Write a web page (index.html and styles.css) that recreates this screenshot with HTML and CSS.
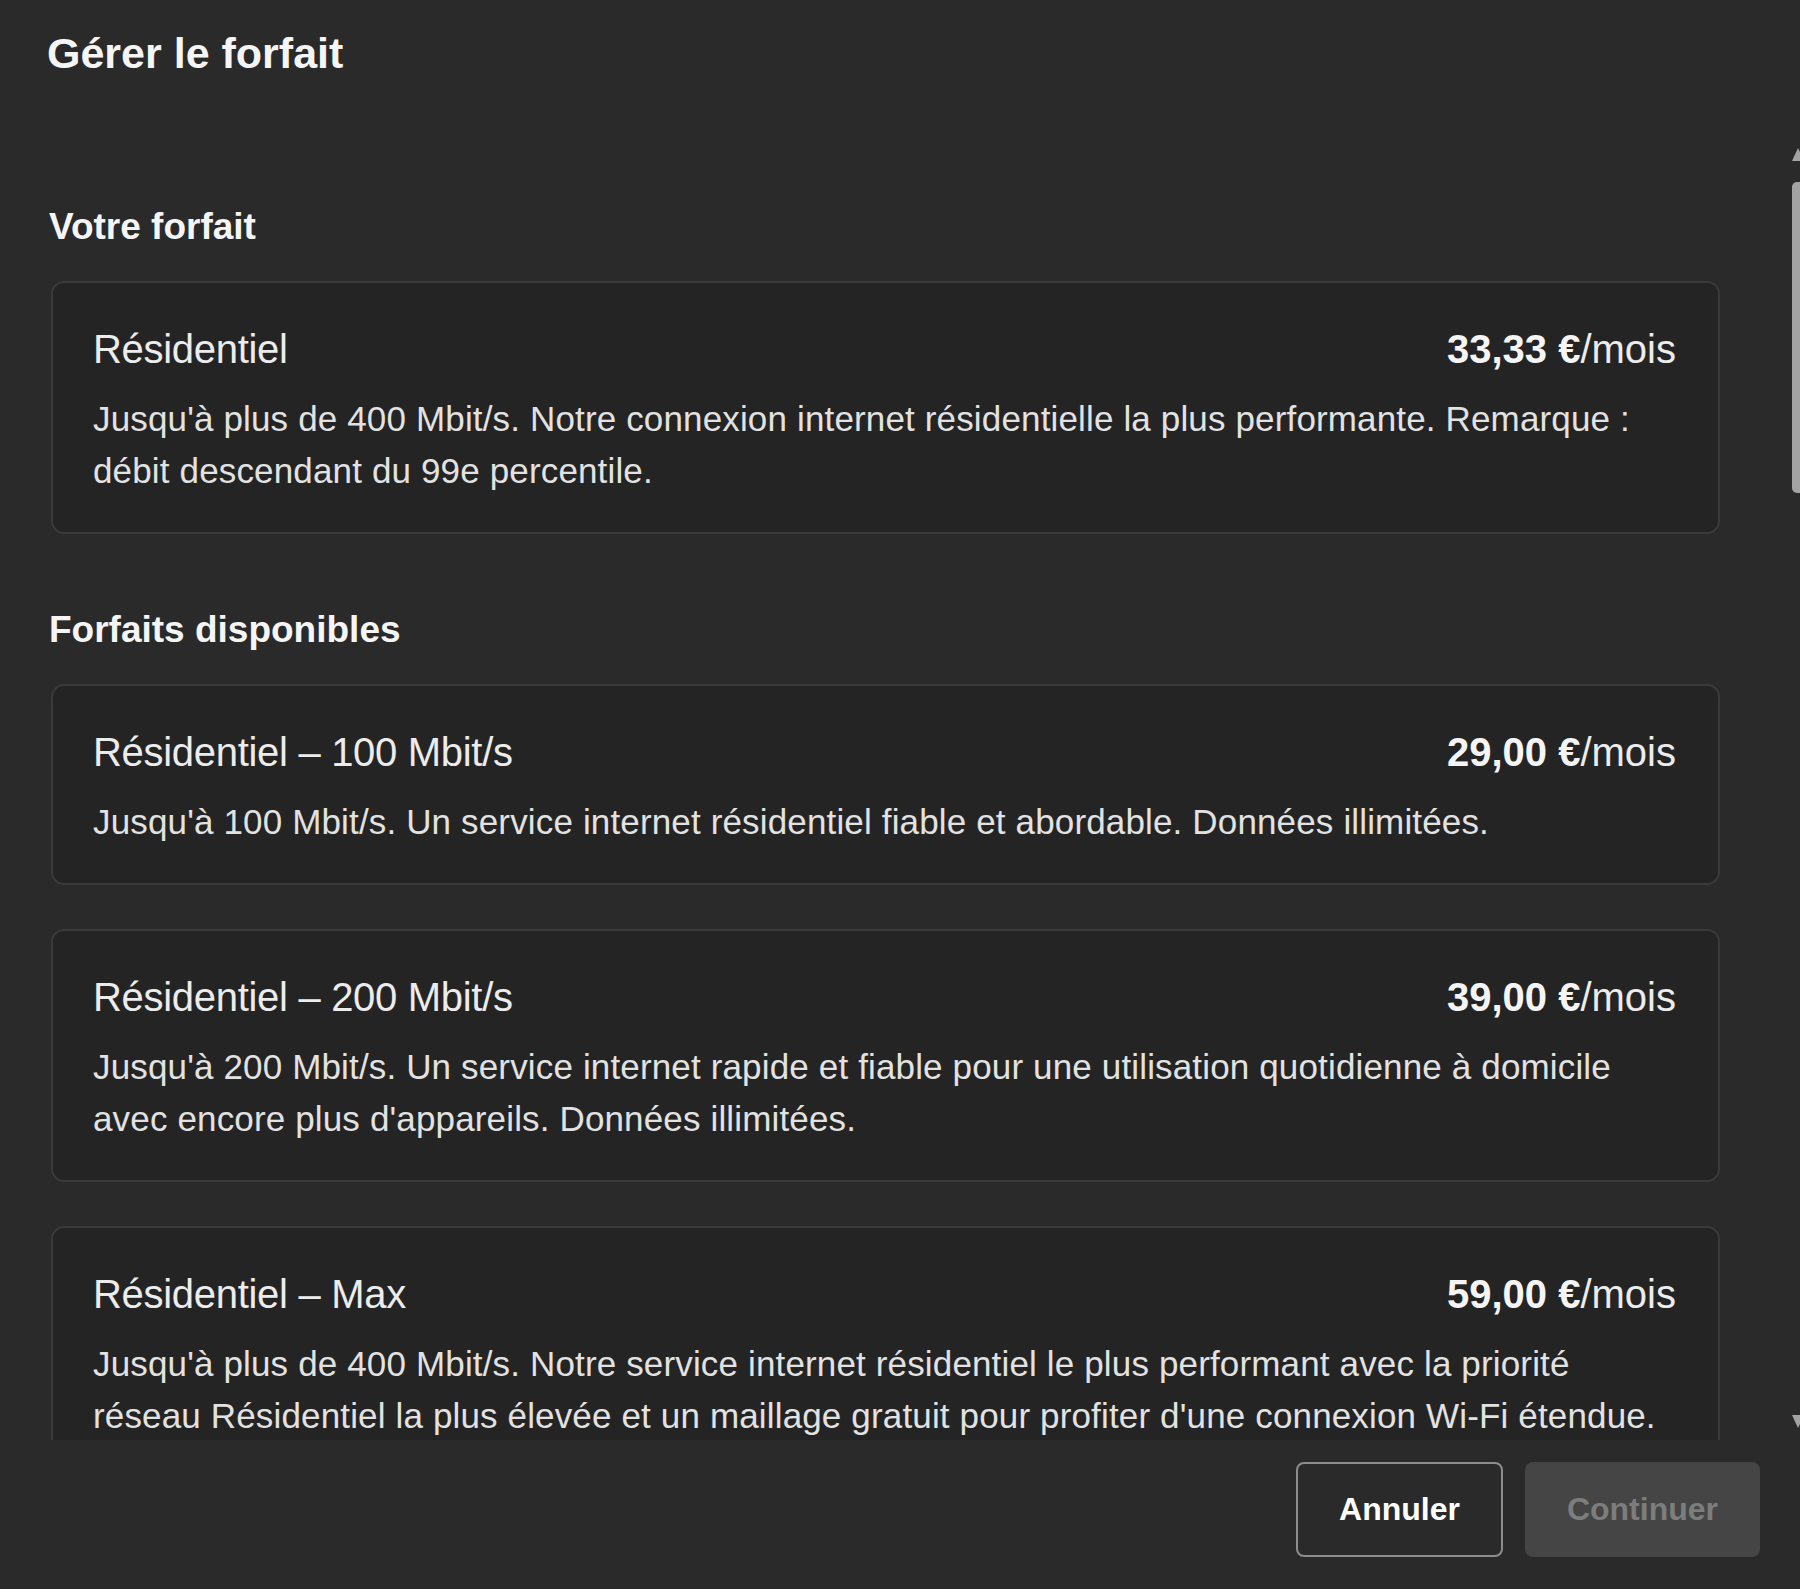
FILE: index.html
```html
<!DOCTYPE html>
<html lang="fr">
<head>
  <meta charset="UTF-8" />
  <meta name="viewport" content="width=device-width, initial-scale=1.0"/>
  <title>Gérer le forfait</title>
  <link rel="stylesheet" href="styles.css">
</head>
<body>
  <div class="dialog">
    <header class="dialog-header">
      <h1>Gérer le forfait</h1>
    </header>

    <div class="dialog-body">
      <h2 class="section-title">Votre forfait</h2>
      <div class="plan-card">
        <div class="plan-top">
          <span class="plan-name">Résidentiel</span>
          <span class="plan-price"><strong>33,33 €</strong>/mois</span>
        </div>
        <p class="plan-desc">Jusqu'à plus de 400 Mbit/s. Notre connexion internet résidentielle la plus performante. Remarque : débit descendant du 99e percentile.</p>
      </div>

      <h2 class="section-title spaced">Forfaits disponibles</h2>
      <div class="plan-list">
        <div class="plan-card">
          <div class="plan-top">
            <span class="plan-name">Résidentiel – 100 Mbit/s</span>
            <span class="plan-price"><strong>29,00 €</strong>/mois</span>
          </div>
          <p class="plan-desc">Jusqu'à 100 Mbit/s. Un service internet résidentiel fiable et abordable. Données illimitées.</p>
        </div>
        <div class="plan-card">
          <div class="plan-top">
            <span class="plan-name">Résidentiel – 200 Mbit/s</span>
            <span class="plan-price"><strong>39,00 €</strong>/mois</span>
          </div>
          <p class="plan-desc">Jusqu'à 200 Mbit/s. Un service internet rapide et fiable pour une utilisation quotidienne à domicile avec encore plus d'appareils. Données illimitées.</p>
        </div>
        <div class="plan-card">
          <div class="plan-top">
            <span class="plan-name">Résidentiel – Max</span>
            <span class="plan-price"><strong>59,00 €</strong>/mois</span>
          </div>
          <p class="plan-desc">Jusqu'à plus de 400 Mbit/s. Notre service internet résidentiel le plus performant avec la priorité réseau Résidentiel la plus élevée et un maillage gratuit pour profiter d'une connexion Wi-Fi étendue.</p>
        </div>
      </div>
    </div>

    <div class="scrollbar">
      <div class="arrow-up"></div>
      <div class="thumb"></div>
      <div class="arrow-down"></div>
    </div>

    <footer class="dialog-footer">
      <button class="btn btn-outline">Annuler</button>
      <button class="btn btn-disabled" disabled>Continuer</button>
    </footer>
  </div>
</body>
</html>
```

FILE: styles.css
```css
body {
  margin: 0;
  background-color: #2a2a2a;
  color: #f2f2f2;
  font-family: 'Liberation Sans', Arial, sans-serif;
  overflow: hidden;
}
.dialog {
  position: relative;
  height: 100vh;
  display: flex;
  flex-direction: column;
}
.dialog-header {
  height: 140px;
  box-sizing: border-box;
  padding: 27px 0 0 47px;
}
.dialog-header h1 {
  margin: 0;
  font-size: 43px;
  line-height: 52px;
  font-weight: bold;
  color: #f5f5f5;
}
.dialog-body {
  flex: 1;
  overflow: hidden;
  padding: 65px 80px 0 49px;
}
.section-title {
  margin: 0 0 32px;
  font-size: 37px;
  line-height: 44px;
  font-weight: bold;
  color: #f5f5f5;
}
.section-title.spaced {
  margin-top: 74px;
}
.plan-list {
  display: flex;
  flex-direction: column;
  gap: 44px;
}
.plan-card {
  margin-left: 2px;
  background-color: #242424;
  border: 2px solid #3a3a3a;
  border-radius: 13px;
  padding: 42px 42px 35px 40px;
}
.plan-top {
  display: flex;
  justify-content: space-between;
  align-items: baseline;
  font-size: 40px;
  line-height: 48px;
  color: #ececec;
}
.plan-name {
  letter-spacing: -0.3px;
}
.plan-price strong {
  color: #f5f5f5;
}
.plan-desc {
  margin: 20px 0 0;
  font-size: 35px;
  line-height: 52px;
  letter-spacing: 0.15px;
  color: #e2e2e2;
}
.scrollbar {
  position: absolute;
  top: 148px;
  right: -4px;
  width: 12px;
  height: 1280px;
  display: flex;
  flex-direction: column;
  align-items: center;
}
.arrow-up {
  width: 0;
  height: 0;
  border-left: 6px solid transparent;
  border-right: 6px solid transparent;
  border-bottom: 13px solid #a3a3a3;
}
.thumb {
  margin-top: 21px;
  width: 12px;
  height: 311px;
  border-radius: 5px;
  background-color: #a3a3a3;
}
.arrow-down {
  margin-top: auto;
  width: 0;
  height: 0;
  border-left: 6px solid transparent;
  border-right: 6px solid transparent;
  border-top: 13px solid #a3a3a3;
}
.dialog-footer {
  display: flex;
  justify-content: flex-end;
  gap: 22px;
  padding: 22px 40px 32px;
}
.btn {
  height: 95px;
  border-radius: 8px;
  font-family: inherit;
  font-size: 32px;
  font-weight: bold;
  padding: 0 41px;
}
.btn-outline {
  background: transparent;
  border: 2px solid #8c8c8c;
  color: #ffffff;
}
.btn-disabled {
  background-color: #454545;
  border: 2px solid #454545;
  color: #7d7d7d;
  padding: 0 40px;
}
```
